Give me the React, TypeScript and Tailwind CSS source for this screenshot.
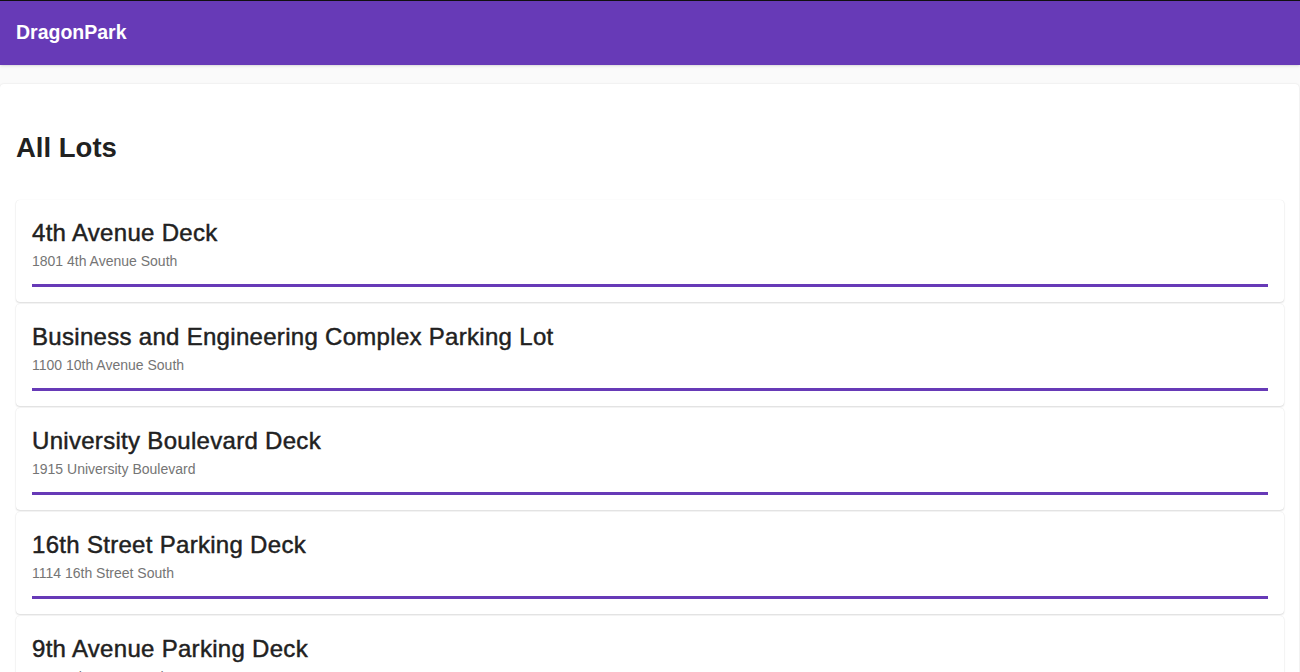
const LOTS = [
  { name: '4th Avenue Deck', address: '1801 4th Avenue South' },
  { name: 'Business and Engineering Complex Parking Lot', address: '1100 10th Avenue South' },
  { name: 'University Boulevard Deck', address: '1915 University Boulevard' },
  { name: '16th Street Parking Deck', address: '1114 16th Street South' },
  { name: '9th Avenue Parking Deck', address: '927 10th Street South' },
];

export default function App() {
  return (
    <div className="min-h-screen bg-[#fafafa] font-['Liberation_Sans',Arial,sans-serif] text-[#212121] border-t border-[#111]">
      {/* app bar */}
      <header className="h-16 bg-[#673ab7] flex items-center px-4 shadow-sm">
        <span className="text-white text-[19.5px] font-bold">DragonPark</span>
      </header>

      <main className="mt-[19px] mr-[1px] bg-white rounded-t-[4px] shadow-[0_0_2px_rgba(0,0,0,0.12)] pl-4 pr-[15px] pt-12 pb-8">
        <h1 className="text-[27.5px] leading-8 font-bold mb-9">All Lots</h1>

        <div className="flex flex-col gap-[2px]">
          {LOTS.map((lot) => (
            <div
              key={lot.name}
              className="bg-white rounded-[4px] shadow-[0_1px_2px_rgba(0,0,0,0.14),0_0_1px_rgba(0,0,0,0.1)] px-4 pt-[17px] pb-[15px]"
            >
              <div className="text-[24px] leading-8 tracking-[0.3px] [-webkit-text-stroke:0.45px_#212121]">
                {lot.name}
              </div>
              <div className="mt-[2px] text-[14px] leading-5 text-[#757575]">{lot.address}</div>
              <div className="mt-[13px] h-[3px] bg-[#673ab7]" />
            </div>
          ))}
        </div>
      </main>
    </div>
  );
}
